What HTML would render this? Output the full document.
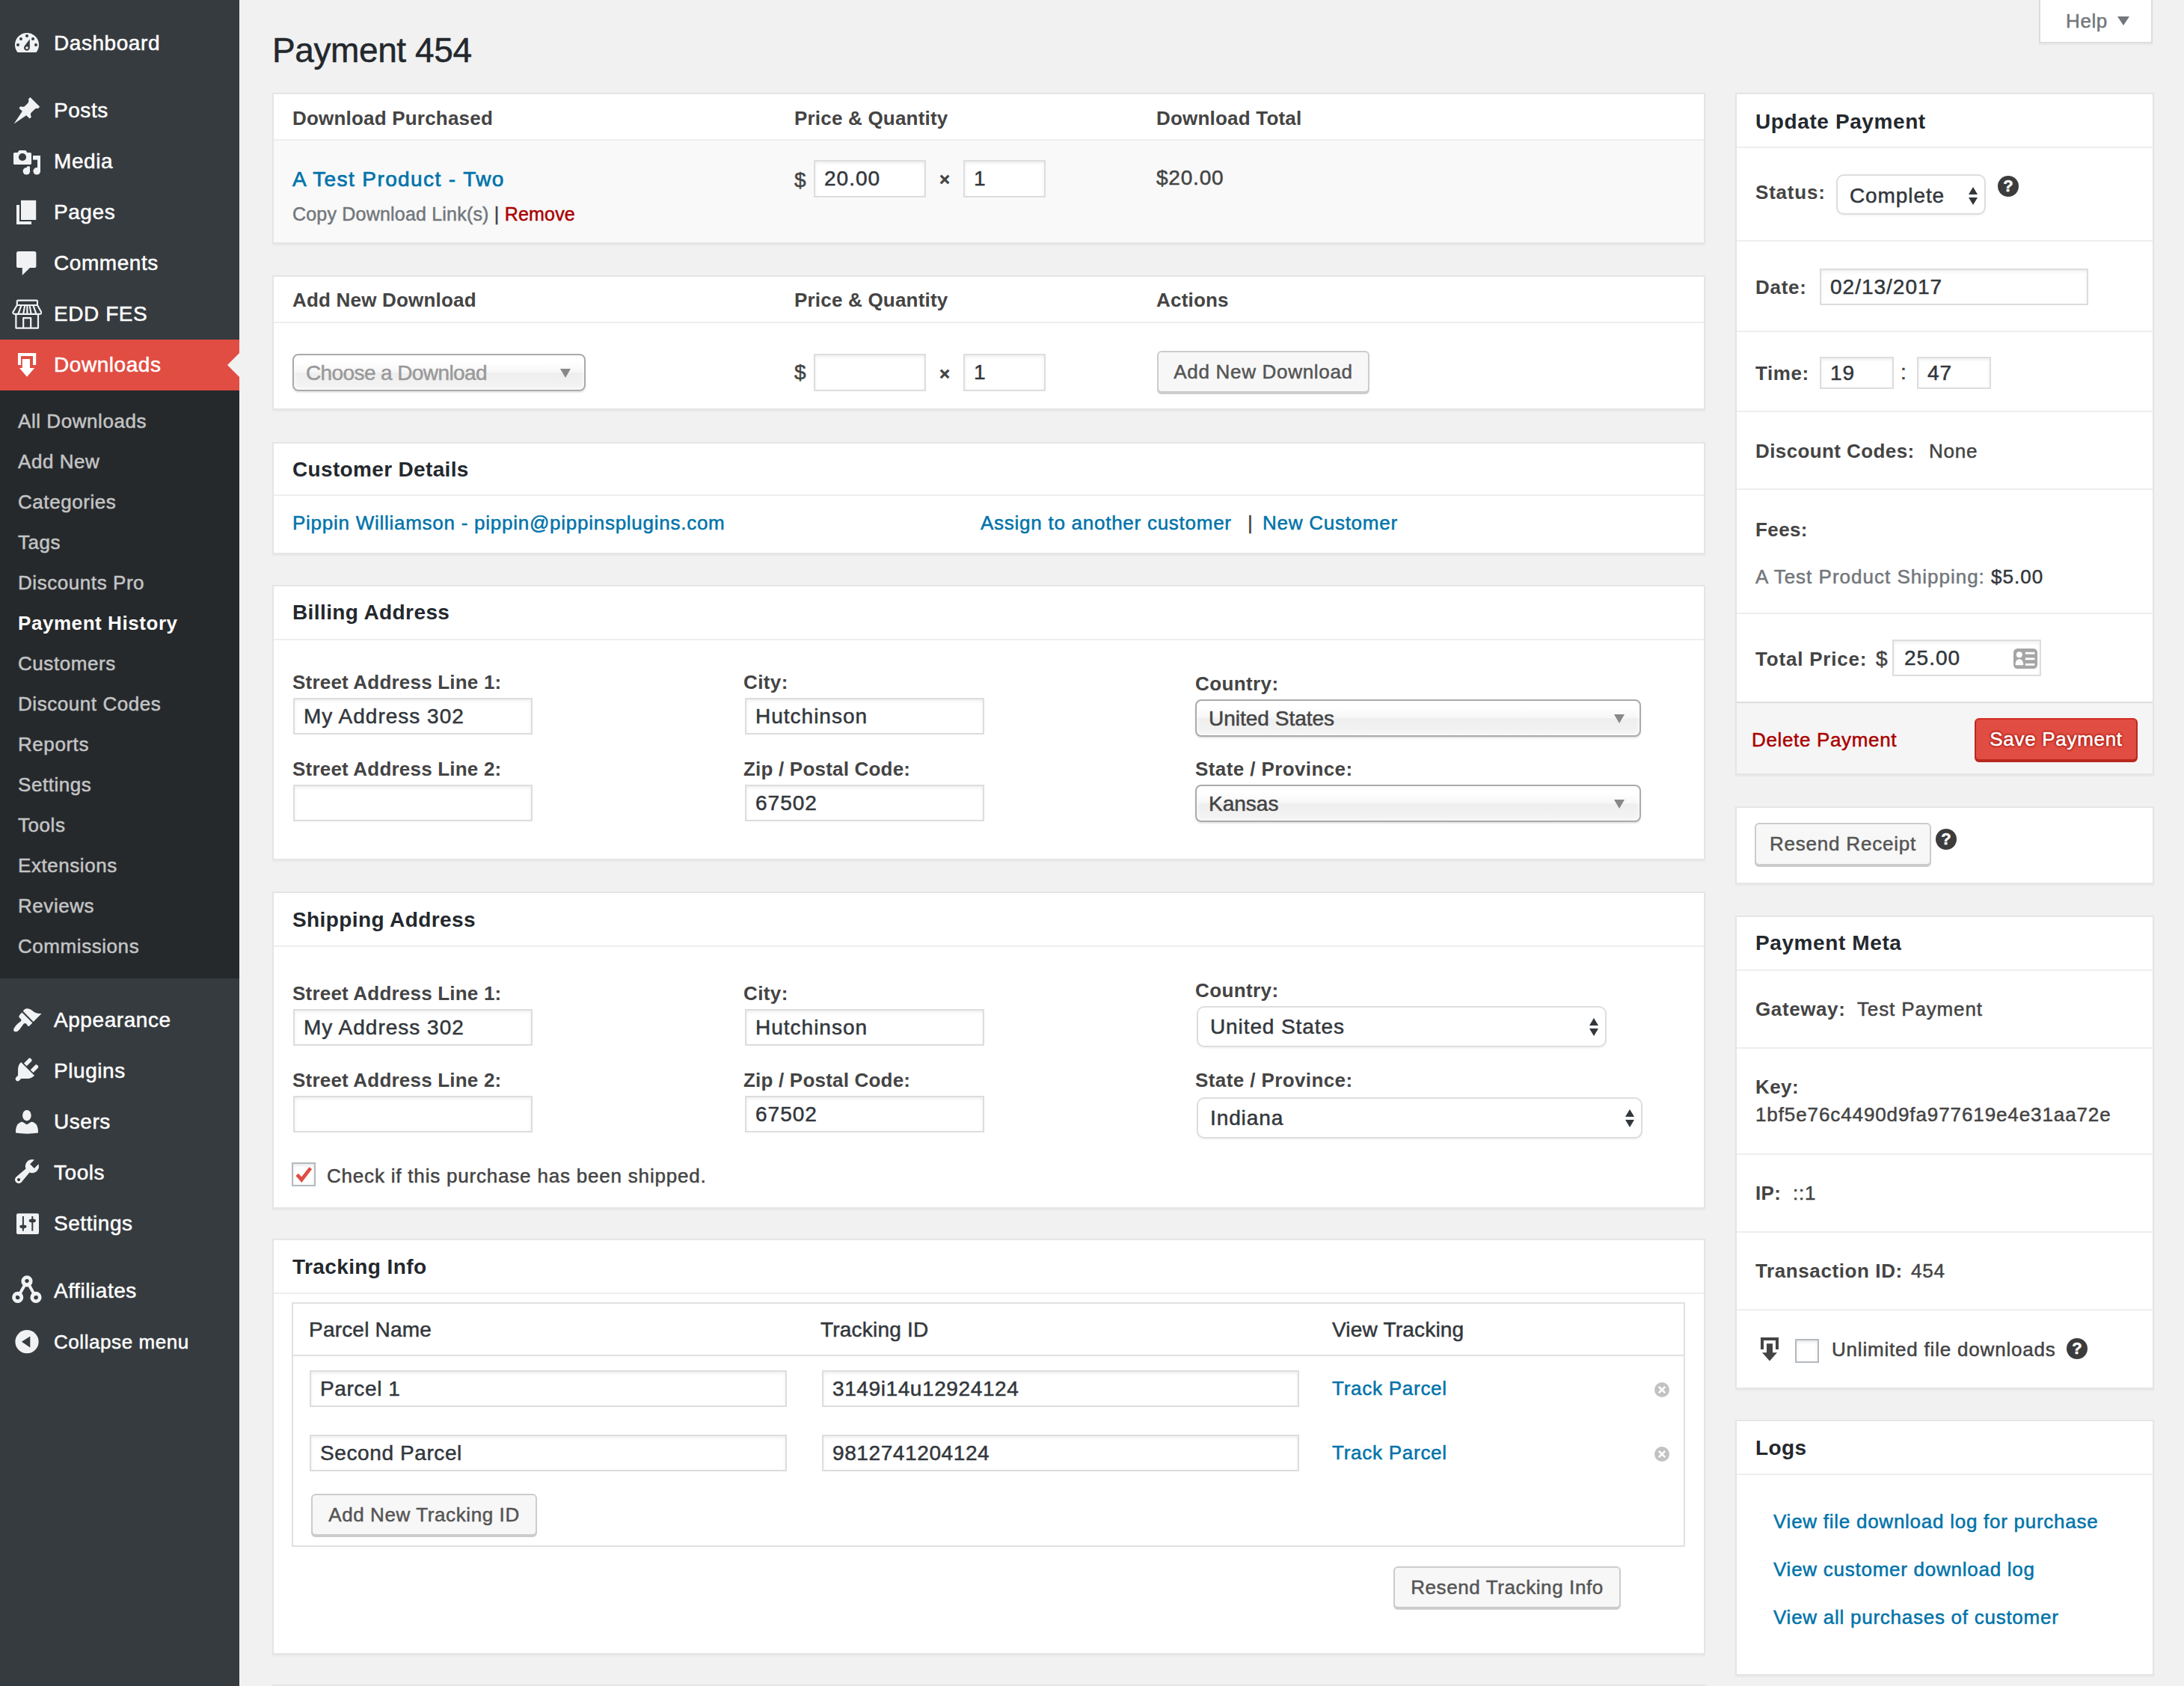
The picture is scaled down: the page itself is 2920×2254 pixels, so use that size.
<!DOCTYPE html>
<html><head><meta charset="utf-8">
<style>
html{zoom:2}
*{box-sizing:border-box}
body{margin:0;-webkit-text-stroke:.25px currentColor;width:1460px;height:1127px;overflow:hidden;background:#f1f1f1;font-family:"Liberation Sans",sans-serif;font-size:13px;color:#444;position:relative}
.t{position:absolute;white-space:nowrap;line-height:20px;letter-spacing:.4px}
#menu{position:absolute;left:0;top:0;width:160px;height:1127px;background:#363b3f}
.mi{position:absolute;left:0;width:160px;height:34px;color:#fff;font-size:14px}
.mi span{position:absolute;left:36px;top:8px;line-height:18px;letter-spacing:.28px}
.mi svg{position:absolute;left:8px;top:7px;width:20px;height:20px}
.sub{position:absolute;left:0;top:261px;width:160px;height:393px;background:#26292c}
.si{position:absolute;left:12px;font-size:13px;color:#c3c4c5;line-height:27px;height:27px;letter-spacing:.28px}
.pb{position:absolute;background:#fff;border:1px solid #e5e5e5;box-shadow:0 1px 1px rgba(0,0,0,.04)}
.hl{position:absolute;left:0;right:0;height:1px;background:#eee}
.h2{-webkit-text-stroke:0;font-size:14px;font-weight:bold;color:#23282d;letter-spacing:.2px}
.th{-webkit-text-stroke:0;font-size:13px;font-weight:bold;color:#444;letter-spacing:.1px}
.lbl{-webkit-text-stroke:0;font-size:13px;font-weight:bold;color:#444;letter-spacing:.2px}
.inp{position:absolute;background:#fff;border:1px solid #ddd;box-shadow:inset 0 1px 2px rgba(0,0,0,.07);font-size:14px;color:#32373c;padding-left:6px;white-space:nowrap;letter-spacing:.5px;display:flex;align-items:center}
.btn{position:absolute;background:#f7f7f7;border:1px solid #ccc;border-radius:3px;box-shadow:0 1px 0 #ccc;font-size:13px;color:#555;display:flex;align-items:center;justify-content:center;white-space:nowrap;letter-spacing:.3px}
.lnk{color:#0073aa;font-size:13px;letter-spacing:.37px}
.chs{position:absolute;border:1px solid #aaa;border-radius:4px;background:linear-gradient(#fff 20%,#f6f6f6 50%,#eee 52%,#f4f4f4);box-shadow:0 0 3px #fff inset,0 1px 1px rgba(0,0,0,.1)}
.chs span{position:absolute;left:8px;top:2px;line-height:20px;font-size:14px;color:#444;white-space:nowrap}
.chs i{position:absolute;right:10px;top:9px;border-left:3.5px solid transparent;border-right:3.5px solid transparent;border-top:6px solid #888}
.nsel{position:absolute;border:1px solid #ddd;border-radius:5px;background:#fff;box-shadow:0 1px 1px rgba(0,0,0,.04)}
.nsel span{position:absolute;left:8px;top:3px;line-height:20px;font-size:14px;color:#32373c;white-space:nowrap;letter-spacing:.45px}
.nsel b{position:absolute;right:4.5px;top:7px;width:6px;height:12px}
.nsel b:before{content:"";position:absolute;left:0;top:0;border-left:3px solid transparent;border-right:3px solid transparent;border-bottom:5px solid #32373c}
.nsel b:after{content:"";position:absolute;left:0;top:7px;border-left:3px solid transparent;border-right:3px solid transparent;border-top:5px solid #32373c}
.qic{position:absolute;width:14px;height:14px;border-radius:50%;background:#3c3c3c}
.qic:after{content:"?";position:absolute;left:0;right:0;top:0;text-align:center;font-size:11px;line-height:14px;font-weight:bold;color:#fff}
.xs{position:absolute}
</style></head><body>

<div id="menu">
  <div class="mi" style="top:12px"><svg viewBox="0 0 20 20"><path d="M3.8 16 A8 8 0 1 1 16.2 16 Z" fill="#f1f2f3"/><g fill="#363b3f"><circle cx="10" cy="5" r="1"/><circle cx="6" cy="7" r="1"/><circle cx="14" cy="7" r="1"/><circle cx="4" cy="11" r="1"/><circle cx="16" cy="11" r="1"/><path d="M11.9 7.1 L11.9 13 A1.95 1.95 0 1 1 8.3 11.9 Z"/></g><circle cx="10" cy="13" r="0.9" fill="#f1f2f3"/></svg><span>Dashboard</span></div>
  <div class="mi" style="top:57px"><svg viewBox="0 0 20 20"><path d="M12.2 1 L18.6 7.4 L17.4 8.6 Q16.1 8 15 9.2 L12.6 11.6 Q12.1 13.2 13 14.1 L11.8 15.3 L9.6 13.1 L1.3 18.7 L6.9 10.4 L4.7 8.2 L5.9 7 Q7 7.8 8.4 7.1 L10.8 4.7 Q11.6 3.6 11 2.2 Z" fill="#f1f2f3"/></svg><span>Posts</span></div>
  <div class="mi" style="top:91px"><svg viewBox="0 0 20 20"><g fill="#f1f2f3"><path d="M1.8 4 Q1 4 1 4.8 V11.2 Q1 12 1.8 12 H12.2 Q13 12 13 11.2 V4.8 Q13 4 12.2 4 H10.2 L9.4 2.8 Q9.2 2.5 8.8 2.5 H5.2 Q4.8 2.5 4.6 2.8 L3.8 4 Z"/><rect x="17" y="6" width="2" height="11"/><rect x="14" y="6" width="5" height="2.8"/><rect x="10" y="13.2" width="2" height="3.5"/><circle cx="9.7" cy="16.4" r="2.4"/><circle cx="16.6" cy="16.4" r="2.4"/></g><circle cx="7" cy="7" r="2.55" fill="#363b3f"/></svg><span>Media</span></div>
  <div class="mi" style="top:125px"><svg viewBox="0 0 20 20"><g fill="#f1f2f3"><rect x="6" y="1.9" width="10.1" height="13.1"/><path d="M3 5 H5 V16 H13 V18 H3 Z"/></g></svg><span>Pages</span></div>
  <div class="mi" style="top:159px"><svg viewBox="0 0 20 20"><path d="M4.3 2 H14.9 Q16.2 2 16.2 3.3 V11.7 Q16.2 13 14.9 13 H12 L6.9 18 V13 H4.3 Q3 13 3 11.7 V3.3 Q3 2 4.3 2 Z" fill="#f1f2f3"/></svg><span>Comments</span></div>
  <div class="mi" style="top:193px"><svg viewBox="0 0 20 20"><g fill="none" stroke="#f1f2f3" stroke-width="1.1" stroke-linejoin="round"><rect x="3.4" y="0.8" width="13.6" height="3.2" rx="0.6"/><path d="M3.4 4 L0.7 8.6 Q0.5 9.9 1.8 9.9 H18.6 Q19.9 9.9 19.6 8.6 L17 4"/><path d="M2.7 9.9 V19.3 H17.5 V9.9"/><path d="M7.6 19.3 V12.6 H12.6 V19.3"/><path d="M6.2 4.2 L4.2 9.8 M8.6 4.2 L7.6 9.8 M10.2 4.2 V9.8 M11.8 4.2 L12.8 9.8 M14.2 4.2 L16.2 9.8"/></g></svg><span>EDD FES</span></div>
  <div class="mi" style="top:227px;background:#e14d43"><div style="position:absolute;right:0;top:9px;border-top:8px solid transparent;border-bottom:8px solid transparent;border-right:8px solid #f1f1f1"></div><svg viewBox="0 0 20 20"><g fill="#fff"><path d="M4 2 H16.1 V10 H14 V4 H6 V10 H4 Z"/><path d="M6.9 6 H12 V12 H15.1 L10 17.9 L5 12 H6.9 Z"/></g></svg><span>Downloads</span></div>
  <div class="sub">
    <div class="si" style="top:7px">All Downloads</div>
    <div class="si" style="top:34px">Add New</div>
    <div class="si" style="top:61px">Categories</div>
    <div class="si" style="top:88px">Tags</div>
    <div class="si" style="top:115px">Discounts Pro</div>
    <div class="si" style="top:142px;color:#fff;font-weight:bold;-webkit-text-stroke:0">Payment History</div>
    <div class="si" style="top:169px">Customers</div>
    <div class="si" style="top:196px">Discount Codes</div>
    <div class="si" style="top:223px">Reports</div>
    <div class="si" style="top:250px">Settings</div>
    <div class="si" style="top:277px">Tools</div>
    <div class="si" style="top:304px">Extensions</div>
    <div class="si" style="top:331px">Reviews</div>
    <div class="si" style="top:358px">Commissions</div>
  </div>
  <div class="mi" style="top:664px"><svg viewBox="0 0 20 20"><path fill="#f1f2f3" d="M7.4 4.9 Q8.5 2.9 10.5 3.1 Q12.5 3.4 14.5 5.2 Q16.5 6.6 19.8 6.5 L14.3 12.0 Z"/><path fill="#f1f2f3" d="M6.7 5.8 L13.7 12.7 L11.8 14.6 Q11.2 15.3 10.6 14.8 L9.6 13.4 Q8.7 12.6 7.7 13.5 L5.0 17.2 Q3.5 19 1.8 18.5 Q0.6 18 1.3 16.5 Q2.6 14 5.8 11.8 Q6.6 11.2 6.1 10.4 Q5.2 9.8 4.6 8.6 Q4.7 7.8 5.4 7.1 Z"/></svg><span style="top:9px">Appearance</span></div>
  <div class="mi" style="top:698px"><svg viewBox="0 0 20 20"><path fill="#f1f2f3" d="M13.11 4.36L9.87 7.6 8 5.73l3.24-3.24c.35-.34 1.05-.2 1.56.32.52.51.66 1.21.31 1.55zm-8 1.77l.91-1.12 9.01 9.01-1.19.84c-.71.71-2.63 1.16-3.82 1.16H6.14L4.9 17.26c-.59.59-1.54.59-2.12 0-.59-.58-.59-1.53 0-2.12l1.24-1.24v-3.88c0-1.13.4-3.19 1.09-3.89zm7.26 3.97l3.24-3.24c.34-.35 1.04-.21 1.55.31.52.51.66 1.21.31 1.55l-3.24 3.25z"/></svg><span style="top:9px">Plugins</span></div>
  <div class="mi" style="top:732px"><svg viewBox="0 0 20 20"><g fill="#f1f2f3"><ellipse cx="9.95" cy="6.6" rx="2.9" ry="3.6"/><path d="M2.5 18.3 Q2.3 12.7 5.5 11.2 Q6.8 10.6 7.4 11.1 L9.95 12.7 L12.5 11.1 Q13.2 10.6 14.5 11.2 Q17.7 12.7 17.5 18.3 Q10 19.4 2.5 18.3 Z"/></g></svg><span style="top:9px">Users</span></div>
  <div class="mi" style="top:766px"><svg viewBox="0 0 20 20"><path fill="#f1f2f3" d="M16.68 9.77c-1.34 1.34-3.3 1.67-4.95.99l-5.41 6.52c-.99.99-2.59.99-3.58 0s-.99-2.59 0-3.57l6.52-5.42c-.68-1.65-.35-3.61.99-4.95 1.28-1.28 3.12-1.62 4.72-1.06l-2.89 2.89 2.82 2.82 2.86-2.87c.53 1.58.18 3.39-1.08 4.65zM3.81 16.21c.4.39 1.04.39 1.43 0 .4-.4.4-1.04 0-1.43-.39-.4-1.03-.4-1.43 0-.39.39-.39 1.03 0 1.43z"/></svg><span style="top:9px">Tools</span></div>
  <div class="mi" style="top:800px"><svg viewBox="0 0 20 20"><rect x="3" y="4.1" width="15" height="13.9" rx="1" fill="#f1f2f3"/><g fill="#363b3f"><rect x="6.95" y="6" width="1" height="9.8"/><rect x="13.15" y="6" width="1" height="9.8"/><ellipse cx="7.45" cy="12.9" rx="2.3" ry="1.2"/><ellipse cx="13.65" cy="9" rx="2.3" ry="1.2"/></g></svg><span style="top:9px">Settings</span></div>
  <div class="mi" style="top:845px"><svg viewBox="0 0 20 20"><g fill="none" stroke="#f1f2f3"><path d="M10 4.4 L3.85 15.2 M10 4.4 L16 15.2" stroke-width="2"/><circle cx="10" cy="4.4" r="2.6" stroke-width="2.4"/><circle cx="3.85" cy="15.2" r="2.6" stroke-width="2.4"/><circle cx="16" cy="15.2" r="2.6" stroke-width="2.4"/></g><g fill="#363b3f"><circle cx="10" cy="4.4" r="1.2"/><circle cx="3.85" cy="15.2" r="1.2"/><circle cx="16" cy="15.2" r="1.2"/></g></svg><span style="top:9px">Affiliates</span></div>
  <div class="mi" style="top:879px;font-size:13px"><svg viewBox="0 0 20 20"><circle cx="10" cy="10.85" r="7.8" fill="#f1f2f3"/><path d="M6.45 10.85 L12.15 7.25 V14.75 Z" fill="#363b3f"/></svg><span style="top:9px">Collapse menu</span></div>
</div>
<h1 class="t" style="left:182px;top:19px;font-size:23px;letter-spacing:-.2px;font-weight:normal;color:#23282d;line-height:29px;margin:0">Payment 454</h1>
<div style="position:absolute;left:1363px;top:-1px;width:76px;height:30px;background:#fff;border:1px solid #ddd;border-top:0;box-shadow:0 1px 1px rgba(0,0,0,.04)">
  <span class="t" style="left:17px;top:5px;font-size:13px;color:#72777c;letter-spacing:.3px">Help</span>
  <div style="position:absolute;left:51.5px;top:12px;width:0;height:0;border-left:4px solid transparent;border-right:4px solid transparent;border-top:6px solid #72777c"></div>
</div>

<!-- P1 -->
<div class="pb" style="left:182px;top:62px;width:958px;height:101px">
  <div style="position:absolute;left:0;right:0;top:30px;bottom:0;background:#f9f9f9;border-top:1px solid #eee"></div>
  <span class="t th" style="left:12.5px;top:6px">Download Purchased</span>
  <span class="t th" style="left:348px;top:6px">Price &amp; Quantity</span>
  <span class="t th" style="left:590px;top:6px">Download Total</span>
  <span class="t lnk" style="left:12.5px;top:47px;font-size:14px;-webkit-text-stroke:.35px currentColor;letter-spacing:.7px">A Test Product - Two</span>
  <span class="t" style="left:12.5px;top:70px;font-size:12.5px;color:#72777c;letter-spacing:.1px">Copy Download Link(s) <span style="color:#444">|</span> <span style="color:#a00">Remove</span></span>
  <span class="t" style="left:348px;top:47.5px;font-size:14px">$</span>
  <div class="inp" style="left:361px;top:44px;width:75px;height:25px">20.00</div>
  <span class="t" style="left:445px;top:47px;font-size:12px;font-weight:bold">×</span>
  <div class="inp" style="left:461px;top:44px;width:55px;height:25px">1</div>
  <span class="t" style="left:590px;top:46px;font-size:14px;color:#444;letter-spacing:.4px">$20.00</span>
</div>

<!-- P2 -->
<div class="pb" style="left:182px;top:184px;width:958px;height:90px">
  <div class="hl" style="top:30px"></div>
  <span class="t th" style="left:12.5px;top:5.5px">Add New Download</span>
  <span class="t th" style="left:348px;top:5.5px">Price &amp; Quantity</span>
  <span class="t th" style="left:590px;top:5.5px">Actions</span>
  <div style="position:absolute;left:12.5px;top:51.5px;width:196px;height:25px;border:1px solid #aaa;border-radius:4px;background:linear-gradient(#fff 20%,#f6f6f6 50%,#eee 52%,#f4f4f4);box-shadow:0 0 3px #fff inset,0 1px 1px rgba(0,0,0,.1)">
    <span class="t" style="left:8px;top:2px;font-size:14px;color:#999;letter-spacing:-.3px">Choose a Download</span>
    <div style="position:absolute;right:9px;top:9px;border-left:3.5px solid transparent;border-right:3.5px solid transparent;border-top:6px solid #888"></div>
  </div>
  <span class="t" style="left:348px;top:54px;font-size:14px">$</span>
  <div class="inp" style="left:361px;top:51.5px;width:75px;height:25px"></div>
  <span class="t" style="left:445px;top:55px;font-size:12px;font-weight:bold">×</span>
  <div class="inp" style="left:461px;top:51.5px;width:55px;height:25px">1</div>
  <div class="btn" style="left:590.5px;top:49.5px;width:142px;height:28px;font-size:13px;letter-spacing:.35px">Add New Download</div>
</div>

<!-- P3 -->
<div class="pb" style="left:182px;top:295.5px;width:958px;height:75px">
  <div class="hl" style="top:34px"></div>
  <span class="t h2" style="left:12.5px;top:7.5px;letter-spacing:.17px">Customer Details</span>
  <span class="t lnk" style="left:12.5px;top:43px">Pippin Williamson - pippin@pippinsplugins.com</span>
  <span class="t lnk" style="left:472.5px;top:43px">Assign to another customer</span>
  <span class="t" style="left:651px;top:43px;font-size:13px">|</span>
  <span class="t lnk" style="left:661px;top:43px">New Customer</span>
</div>

<!-- P4 Billing -->
<div class="pb" style="left:182px;top:391px;width:958px;height:184px">
  <div class="hl" style="top:35px"></div>
  <span class="t h2" style="left:12.5px;top:7.5px">Billing Address</span>
  <span class="t lbl" style="left:12.5px;top:54px;letter-spacing:.1px">Street Address Line 1:</span>
  <div class="inp" style="left:13px;top:74.5px;width:160px;height:24.5px">My Address 302</div>
  <span class="t lbl" style="left:12.5px;top:112px;letter-spacing:.1px">Street Address Line 2:</span>
  <div class="inp" style="left:13px;top:132.5px;width:160px;height:24.5px"></div>
  <span class="t lbl" style="left:314px;top:54px">City:</span>
  <div class="inp" style="left:315px;top:74.5px;width:160px;height:24.5px">Hutchinson</div>
  <span class="t lbl" style="left:314px;top:112px;letter-spacing:.1px">Zip / Postal Code:</span>
  <div class="inp" style="left:315px;top:132.5px;width:160px;height:24.5px">67502</div>
  <span class="t lbl" style="left:616px;top:55px">Country:</span>
  <div class="chs" style="left:616px;top:75.5px;width:298px;height:25px"><span>United States</span><i></i></div>
  <span class="t lbl" style="left:616px;top:112px">State / Province:</span>
  <div class="chs" style="left:616px;top:132.5px;width:298px;height:25px"><span>Kansas</span><i></i></div>
</div>

<!-- P5 Shipping -->
<div class="pb" style="left:182px;top:596px;width:958px;height:212px">
  <div class="hl" style="top:35px"></div>
  <span class="t h2" style="left:12.5px;top:8px">Shipping Address</span>
  <span class="t lbl" style="left:12.5px;top:57px;letter-spacing:.1px">Street Address Line 1:</span>
  <div class="inp" style="left:13px;top:77.5px;width:160px;height:24.5px">My Address 302</div>
  <span class="t lbl" style="left:12.5px;top:115px;letter-spacing:.1px">Street Address Line 2:</span>
  <div class="inp" style="left:13px;top:135.5px;width:160px;height:24.5px"></div>
  <span class="t lbl" style="left:314px;top:57px">City:</span>
  <div class="inp" style="left:315px;top:77.5px;width:160px;height:24.5px">Hutchinson</div>
  <span class="t lbl" style="left:314px;top:115px;letter-spacing:.1px">Zip / Postal Code:</span>
  <div class="inp" style="left:315px;top:135.5px;width:160px;height:24.5px">67502</div>
  <span class="t lbl" style="left:616px;top:55px">Country:</span>
  <div class="nsel" style="left:617px;top:75.5px;width:274px;height:27.5px"><span>United States</span><b></b></div>
  <span class="t lbl" style="left:616px;top:115px">State / Province:</span>
  <div class="nsel" style="left:617px;top:136.5px;width:298px;height:27.5px"><span>Indiana</span><b></b></div>
  <div style="position:absolute;left:12px;top:180px;width:16px;height:16px;border:1px solid #b4b9be;background:#fff;box-shadow:inset 0 1px 2px rgba(0,0,0,.1)">
    <svg viewBox="0 0 16 16" width="16" height="16" style="position:absolute;left:-1px;top:-1px"><path d="M3.6 8.2 L6.6 11.6 L12.6 3.8" fill="none" stroke="#e14d43" stroke-width="2.4"/></svg>
  </div>
  <span class="t" style="left:35.5px;top:179px;font-size:13px;color:#444">Check if this purchase has been shipped.</span>
</div>

<!-- P6 Tracking -->
<div class="pb" style="left:182px;top:828px;width:958px;height:278px">
  <div class="hl" style="top:35px"></div>
  <span class="t h2" style="left:12.5px;top:8px">Tracking Info</span>
  <div style="position:absolute;left:12px;top:41.5px;width:931.5px;height:163.5px;border:1px solid #e1e1e1">
    <div style="position:absolute;left:0;right:0;top:34px;height:1px;background:#e1e1e1"></div>
    <span class="t" style="left:10.5px;top:7.5px;font-size:14px;color:#32373c;letter-spacing:.1px">Parcel Name</span>
    <span class="t" style="left:352.5px;top:7.5px;font-size:14px;color:#32373c;letter-spacing:.1px">Tracking ID</span>
    <span class="t" style="left:694.5px;top:7.5px;font-size:14px;color:#32373c;letter-spacing:.1px">View Tracking</span>
    <div class="inp" style="left:11px;top:44.5px;width:319px;height:24.5px;letter-spacing:.3px">Parcel 1</div>
    <div class="inp" style="left:353.5px;top:44.5px;width:319px;height:24.5px;letter-spacing:.3px">3149i14u12924124</div>
    <span class="t lnk" style="left:694.5px;top:46.5px">Track Parcel</span>
    <svg class="xs" style="left:910px;top:52.5px" width="10" height="10" viewBox="0 0 10 10"><circle cx="5" cy="5" r="5" fill="#c2c2c2"/><path d="M2.9 2.9 L7.1 7.1 M7.1 2.9 L2.9 7.1" stroke="#fff" stroke-width="1.3"/></svg>
    <div class="inp" style="left:11px;top:87.5px;width:319px;height:24.5px;letter-spacing:.3px">Second Parcel</div>
    <div class="inp" style="left:353.5px;top:87.5px;width:319px;height:24.5px;letter-spacing:.3px">9812741204124</div>
    <span class="t lnk" style="left:694.5px;top:89.5px">Track Parcel</span>
    <svg class="xs" style="left:910px;top:95.5px" width="10" height="10" viewBox="0 0 10 10"><circle cx="5" cy="5" r="5" fill="#c2c2c2"/><path d="M2.9 2.9 L7.1 7.1 M7.1 2.9 L2.9 7.1" stroke="#fff" stroke-width="1.3"/></svg>
    <div class="btn" style="left:12px;top:127px;width:151px;height:28px">Add New Tracking ID</div>
  </div>
  <div class="btn" style="left:748.5px;top:218px;width:152px;height:28px">Resend Tracking Info</div>
</div>

<!-- P7 -->
<div class="pb" style="left:182px;top:1126px;width:958px;height:100px"></div>

<!-- R1 Update Payment -->
<div class="pb" style="left:1160px;top:62px;width:280px;height:456px">
  <span class="t h2" style="left:12.5px;top:8.5px;letter-spacing:.3px">Update Payment</span>
  <div class="hl" style="top:35px"></div>
  <span class="t lbl" style="left:12.5px;top:55.5px;letter-spacing:.4px">Status:</span>
  <div class="nsel" style="left:66.5px;top:53.5px;width:100px;height:27px;border-radius:5px;border-color:#ddd"><span style="left:8px;top:3.5px">Complete</span><b style="top:7.5px;right:4.5px"></b></div>
  <div class="qic" style="left:174.5px;top:54.5px"></div>
  <div class="hl" style="top:97.5px"></div>
  <span class="t lbl" style="left:12.5px;top:119px;letter-spacing:.35px">Date:</span>
  <div class="inp" style="left:55.5px;top:116.5px;width:179.5px;height:24.5px">02/13/2017</div>
  <div class="hl" style="top:158px"></div>
  <span class="t lbl" style="left:12.5px;top:176.5px;letter-spacing:.3px">Time:</span>
  <div class="inp" style="left:55.5px;top:175.5px;width:49.5px;height:21.5px">19</div>
  <span class="t" style="left:109.5px;top:176px;font-size:14px">:</span>
  <div class="inp" style="left:120.5px;top:175.5px;width:49.5px;height:21.5px">47</div>
  <div class="hl" style="top:211.5px"></div>
  <span class="t lbl" style="left:12.5px;top:228.5px">Discount Codes:</span>
  <span class="t" style="left:128.5px;top:228.5px;font-size:13px">None</span>
  <div class="hl" style="top:263.5px"></div>
  <span class="t lbl" style="left:12.5px;top:281px">Fees:</span>
  <span class="t" style="left:12.5px;top:312.5px;font-size:13px;color:#72777c;letter-spacing:.5px">A Test Product Shipping: <span style="color:#32373c">$5.00</span></span>
  <div class="hl" style="top:346.5px"></div>
  <span class="t lbl" style="left:12.5px;top:367.5px;letter-spacing:.4px">Total Price:</span>
  <span class="t" style="left:93px;top:367.5px;font-size:14px">$</span>
  <div class="inp" style="left:104px;top:364.5px;width:99.5px;height:24.5px;padding-left:7px">25.00
    <svg style="position:absolute;left:80px;top:5px" width="16" height="13.5" viewBox="0 0 16 13.5"><rect x="0" y="0" width="16" height="13.5" rx="2.6" fill="#a5a5a5"/><circle cx="3.9" cy="4.1" r="2" fill="#fff"/><path d="M1.3 11.1 Q1.2 7.1 3.9 7.1 Q6.6 7.1 6.6 11.1 Z" fill="#fff"/><rect x="7.9" y="2.4" width="6.3" height="1.4" fill="#fff"/><rect x="7.9" y="6.2" width="6.3" height="1.4" fill="#fff"/><rect x="7.9" y="10" width="6.3" height="1.4" fill="#fff"/></svg>
  </div>
  <div style="position:absolute;left:0;right:0;top:406px;bottom:0;background:#f5f5f5;border-top:1px solid #ddd">
    <span class="t" style="left:10px;top:14.5px;font-size:13px;color:#a00;letter-spacing:.33px">Delete Payment</span>
    <div class="btn" style="left:159px;top:10px;width:109px;height:28.5px;background:#e14d43;border-color:#d02c21 #ba281e #ba281e;box-shadow:0 1px 0 #ba281e;color:#fff;font-size:13px;letter-spacing:.35px;text-shadow:0 -1px 1px #ba281e,1px 0 1px #ba281e,0 1px 1px #ba281e,-1px 0 1px #ba281e">Save Payment</div>
  </div>
</div>

<!-- R2 -->
<div class="pb" style="left:1160px;top:539px;width:280px;height:52px">
  <div class="btn" style="left:12px;top:10px;width:118px;height:28.5px;font-size:13px;letter-spacing:.4px">Resend Receipt</div>
  <div class="qic" style="left:133px;top:14px"></div>
</div>

<!-- R3 Payment Meta -->
<div class="pb" style="left:1160px;top:612px;width:280px;height:316.5px">
  <span class="t h2" style="left:12.5px;top:7.5px;letter-spacing:.3px">Payment Meta</span>
  <div class="hl" style="top:35px"></div>
  <span class="t lbl" style="left:12.5px;top:51.5px;letter-spacing:.3px">Gateway:</span>
  <span class="t" style="left:80.5px;top:51.5px;font-size:13px;letter-spacing:.43px">Test Payment</span>
  <div class="hl" style="top:87px"></div>
  <span class="t lbl" style="left:12.5px;top:103.5px">Key:</span>
  <span class="t" style="left:12.5px;top:122px;font-size:13px;letter-spacing:.45px">1bf5e76c4490d9fa977619e4e31aa72e</span>
  <div class="hl" style="top:158px"></div>
  <span class="t lbl" style="left:12.5px;top:174.5px">IP:</span>
  <span class="t" style="left:37.5px;top:174.5px;font-size:13px">::1</span>
  <div class="hl" style="top:210px"></div>
  <span class="t lbl" style="left:12.5px;top:226.5px;letter-spacing:.3px">Transaction ID:</span>
  <span class="t" style="left:116.5px;top:226.5px;font-size:13px">454</span>
  <div class="hl" style="top:262px"></div>
  <svg style="position:absolute;left:16px;top:281px" width="12" height="16" viewBox="0 0 12 16"><path d="M0 0H12V8H10V2H2V8H0Z M4 4.1H8V10.1H11L6 15.8L1 10.1H4Z" fill="#444"/></svg>
  <div style="position:absolute;left:39px;top:282px;width:16px;height:16px;border:1px solid #b4b9be;background:#fff;box-shadow:inset 0 1px 2px rgba(0,0,0,.1)"></div>
  <span class="t" style="left:63.5px;top:279px;font-size:13px;letter-spacing:.4px">Unlimited file downloads</span>
  <div class="qic" style="left:220.5px;top:281.5px"></div>
</div>

<!-- R4 Logs -->
<div class="pb" style="left:1160px;top:949px;width:280px;height:171px">
  <span class="t h2" style="left:12.5px;top:8px">Logs</span>
  <div class="hl" style="top:35px"></div>
  <span class="t lnk" style="left:24.5px;top:57px">View file download log for purchase</span>
  <span class="t lnk" style="left:24.5px;top:89px">View customer download log</span>
  <span class="t lnk" style="left:24.5px;top:121px">View all purchases of customer</span>
</div>

</body></html>
